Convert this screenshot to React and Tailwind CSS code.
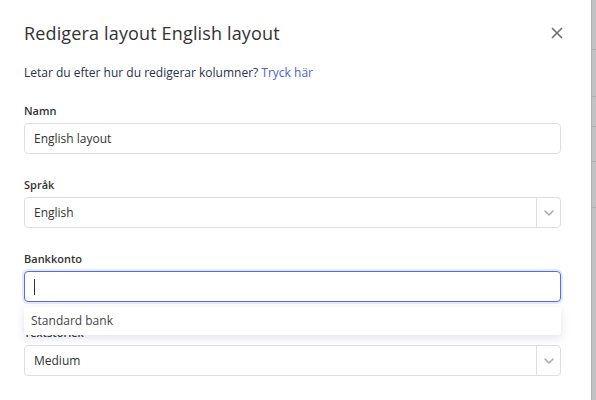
import React from "react";

function Chevron() {
  return (
    <svg width="10" height="6" viewBox="0 0 10 6" fill="none">
      <path d="M1 1l4 4 4-4" stroke="#a3a9b6" strokeWidth="1.5" strokeLinecap="round" strokeLinejoin="round" />
    </svg>
  );
}

function Label({ children }) {
  return <div className="text-[11px] font-semibold text-[#333] leading-[14px] mb-[5px]">{children}</div>;
}

function Select({ value }) {
  return (
    <div className="flex h-[31px] border border-[#dcdee3] rounded-[4px] bg-white">
      <div className="flex-1 flex items-center pl-[9px] text-[12px] text-[#333]">{value}</div>
      <div className="w-[24px] border-l border-[#dcdee3] flex items-center justify-center">
        <Chevron />
      </div>
    </div>
  );
}

export default function App() {
  return (
    <div className="w-[596px] h-[400px] flex bg-white overflow-hidden" style={{ fontFamily: '"Open Sans", "Noto Sans", sans-serif' }}>
      <div className="w-[591px] bg-white pl-[24px] pr-[30px] pt-[20px]">
        <div className="flex items-center justify-between h-[26px]">
          <div className="text-[18px] tracking-[0.15px] text-[#333] leading-[26px]">Redigera layout English layout</div>
          <svg width="12" height="12" viewBox="0 0 12 12" className="mr-[-2px]">
            <path d="M1 1l10 10M11 1L1 11" stroke="#6b6b6b" strokeWidth="1.5" />
          </svg>
        </div>
        <div className="mt-[19px] text-[12px] leading-[16px] text-[#26324f]">
          Letar du efter hur du redigerar kolumner? <span className="text-[#4a63c7]">Tryck här</span>
        </div>
        <div className="mt-[23px]">
          <Label>Namn</Label>
          <div className="h-[31px] border border-[#dcdee3] rounded-[4px] flex items-center pl-[9px] text-[12px] text-[#333]">English layout</div>
        </div>
        <div className="mt-[24px]">
          <Label>Språk</Label>
          <Select value="English" />
        </div>
        <div className="mt-[24px] relative">
          <Label>Bankkonto</Label>
          <div className="h-[31px] border-[1.5px] border-[#4f6ee6] rounded-[4px] flex items-center pl-[9px] shadow-[0_0_0_2px_rgba(79,110,230,0.15)]">
            <div className="w-px h-[16px] bg-[#333]" />
          </div>
          <div className="absolute left-0 right-0 top-[55px] h-[28px] bg-white rounded-[3px] shadow-[0_3px_10px_rgba(60,70,120,0.15)] flex items-center pl-[7px] text-[12px] text-[#444] z-10">
            Standard bank
          </div>
          <div className="mt-[24px]">
            <Label>Textstorlek</Label>
            <Select value="Medium" />
          </div>
        </div>
      </div>
      <div className="flex-1 bg-[#c2c2c4] flex flex-col border-l border-[#b0b0b2]">
        <div className="h-[50px] border-b border-[#aeaeb0]" />
        <div className="h-[47px] border-b border-[#aeaeb0]" />
        <div className="h-[30px] border-b border-[#aeaeb0]" />
        <div className="h-[35px] border-b border-[#aeaeb0]" />
        <div className="h-[46px] border-b border-[#aeaeb0]" />
      </div>
    </div>
  );
}
